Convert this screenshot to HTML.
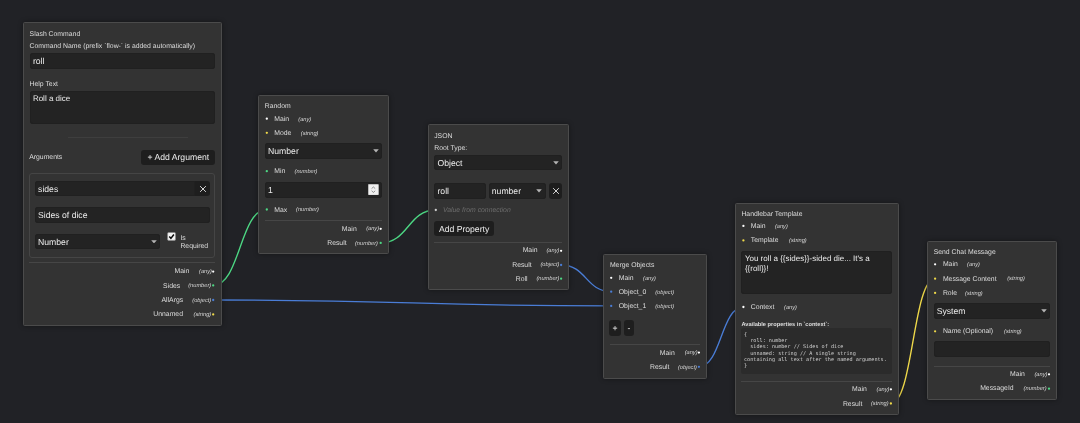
<!DOCTYPE html>
<html lang="en"><head><meta charset="utf-8"><title>Flow Editor</title>
<style>
html,body{margin:0;padding:0}
body{width:1080px;height:423px;overflow:hidden;background:#212226;position:relative;font-family:"Liberation Sans",Arial,sans-serif;color:#dcdcdc}
#c{position:absolute;left:0;top:0;width:1080px;height:423px;will-change:transform}
#c>*{position:absolute;box-sizing:border-box}
.abs{position:absolute}
.node{background:#333333;border:1px solid #4b4b4b;border-radius:1.5px;box-shadow:0 0 5px rgba(0,0,0,.4)}
.tx{white-space:nowrap;color:#dedede;text-rendering:geometricPrecision}
.iv{color:#ececec}
.ty{font-style:italic;color:#d6d6d6}
.lb{color:#dedede}
.mono{font-family:"DejaVu Sans Mono","Liberation Mono",monospace;color:#d0d0d0}
.inp{background:#232323;border-radius:3px;box-shadow:inset 0 0 0 1px #202020}
.btn{background:#1e1e1e;border-radius:3px}
.grp{border:1px solid #454545;border-radius:3px}
.code{background:#2b2b2b;border-radius:2.5px}
.sep{height:1px}
.spin svg{display:block}
</style></head>
<body>
<div id="c">
<svg class="abs" style="left:0;top:0" width="1080" height="423" viewBox="0 0 1080 423"><path d="M213.2 285.4 C240.0 285.4 240.0 209.5 266.8 209.5" stroke="#4dd884" stroke-width="1.35" fill="none"/><path d="M380.7 242.9 C408.2 242.9 408.2 210.0 435.8 210.0" stroke="#4dd884" stroke-width="1.35" fill="none"/><path d="M561.1 265.0 C586.2 265.0 586.2 291.7 611.2 291.7" stroke="#4a7dd6" stroke-width="1.35" fill="none"/><path d="M213.2 300.0 C412.2 300.0 412.2 305.9 611.2 305.9" stroke="#4a7dd6" stroke-width="1.35" fill="none"/><path d="M698.9 366.8 C721.1 366.8 721.1 307.0 743.4 307.0" stroke="#4a7dd6" stroke-width="1.35" fill="none"/><path d="M890.9 403.5 C913.0 403.5 913.0 278.7 935.1 278.7" stroke="#efd94a" stroke-width="1.35" fill="none"/></svg>
<div class="node" style="left:23.00px;top:22.00px;width:199.00px;height:304.00px;"></div>
<div class="tx " style="left:29.60px;top:31px;font-size:6.85px;line-height:8.9px;">Slash Command</div>
<div class="tx " style="left:29.60px;top:43px;font-size:6.85px;line-height:8.9px;">Command Name (prefix `flow-` is added automatically)</div>
<div class="inp" style="left:29.60px;top:53.40px;width:185.30px;height:15.40px;"></div>
<div class="tx iv" style="left:32.90px;top:56px;font-size:8.65px;line-height:11.25px;">roll</div>
<div class="tx " style="left:29.60px;top:81px;font-size:6.85px;line-height:8.9px;">Help Text</div>
<div class="inp" style="left:29.60px;top:90.70px;width:185.30px;height:33.10px;"></div>
<div class="tx iv" style="left:32.90px;top:94px;font-size:8.0px;line-height:10.4px;">Roll a dice</div>
<div class="sep" style="left:68.00px;top:136.70px;width:119.70px;background:#3e3e3e"></div>
<div class="tx " style="left:29.20px;top:154px;font-size:6.85px;line-height:8.9px;">Arguments</div>
<div class="btn" style="left:141.40px;top:149.50px;width:73.40px;height:15.20px;"></div>
<div class="tx iv" style="left:147.50px;top:152px;font-size:8.65px;line-height:11.25px;">+ Add Argument</div>
<div class="grp" style="left:29.20px;top:173.00px;width:185.60px;height:85.00px;"></div>
<div class="inp" style="left:34.80px;top:181.20px;width:160.50px;height:14.90px;border-radius:3px 0 0 3px;"></div>
<div class="tx iv" style="left:38.10px;top:184px;font-size:8.65px;line-height:11.25px;">sides</div>
<div class="btn" style="left:195.30px;top:181.20px;width:14.90px;height:14.90px;border-radius:0 3px 3px 0;"></div>
<svg class="abs" style="left:198.75px;top:184.65px" width="8" height="8" viewBox="-4 -4 8 8"><path d="M-2.6 -2.6L2.6 2.6M2.6 -2.6L-2.6 2.6" stroke="#e8e8e8" stroke-width="0.9" fill="none" stroke-linecap="round"/></svg>
<div class="inp" style="left:34.80px;top:207.00px;width:175.40px;height:15.90px;"></div>
<div class="tx iv" style="left:38.10px;top:210px;font-size:8.65px;line-height:11.25px;">Sides of dice</div>
<div class="inp" style="left:34.80px;top:233.50px;width:125.10px;height:15.90px;"></div>
<div class="tx iv" style="left:38.10px;top:237px;font-size:8.65px;line-height:11.25px;">Number</div>
<svg class="abs" style="left:150.60px;top:239.85px" width="6" height="3.6" viewBox="0 0 6 3.6"><path d="M0.2 0.2H5.8L3 3.4Z" fill="#b4b4b4"/></svg>
<svg class="abs" style="left:167px;top:232px" width="9" height="9" viewBox="0 0 9 9"><rect x="0.6" y="0.5" width="7.9" height="7.9" rx="1.2" fill="#f4f4f4" stroke="#8a8a8a" stroke-width="0.8"/><path d="M2.3 4.6L3.9 6.4L6.9 2.5" stroke="#0a0a0a" stroke-width="1.5" fill="none"/></svg>
<div class="tx " style="left:180.40px;top:235px;font-size:6.85px;line-height:8.9px;">Is</div>
<div class="tx " style="left:180.40px;top:243px;font-size:6.85px;line-height:8.9px;">Required</div>
<div class="sep" style="left:29.20px;top:262.30px;width:185.60px;background:#464646"></div>
<div class="tx lb" style="right:890.70px;top:268px;font-size:6.85px;line-height:8.9px;">Main</div>
<div class="tx ty" style="right:868.00px;top:269px;font-size:5.68px;line-height:7.38px;">(any)</div>
<div class="tx lb" style="right:899.80px;top:283px;font-size:6.85px;line-height:8.9px;">Sides</div>
<div class="tx ty" style="right:868.80px;top:283px;font-size:5.68px;line-height:7.38px;">(number)</div>
<div class="tx lb" style="right:896.80px;top:297px;font-size:6.85px;line-height:8.9px;">AllArgs</div>
<div class="tx ty" style="right:868.80px;top:298px;font-size:5.68px;line-height:7.38px;">(object)</div>
<div class="tx lb" style="right:897.00px;top:311px;font-size:6.85px;line-height:8.9px;">Unnamed</div>
<div class="tx ty" style="right:868.80px;top:312px;font-size:5.68px;line-height:7.38px;">(string)</div>
<div class="node" style="left:258.00px;top:95.00px;width:131.00px;height:159.00px;"></div>
<div class="tx " style="left:264.80px;top:103px;font-size:6.85px;line-height:8.9px;">Random</div>
<div class="tx lb" style="left:274.30px;top:116px;font-size:6.85px;line-height:8.9px;">Main</div>
<div class="tx ty" style="left:298.30px;top:117px;font-size:5.68px;line-height:7.38px;">(any)</div>
<div class="tx lb" style="left:274.30px;top:130px;font-size:6.85px;line-height:8.9px;">Mode</div>
<div class="tx ty" style="left:300.80px;top:131px;font-size:5.68px;line-height:7.38px;">(string)</div>
<div class="inp" style="left:264.80px;top:142.90px;width:117.20px;height:15.80px;"></div>
<div class="tx iv" style="left:268.10px;top:146px;font-size:8.65px;line-height:11.25px;">Number</div>
<svg class="abs" style="left:372.70px;top:149.20px" width="6" height="3.6" viewBox="0 0 6 3.6"><path d="M0.2 0.2H5.8L3 3.4Z" fill="#b4b4b4"/></svg>
<div class="tx lb" style="left:274.30px;top:168px;font-size:6.85px;line-height:8.9px;">Min</div>
<div class="tx ty" style="left:294.50px;top:169px;font-size:5.68px;line-height:7.38px;">(number)</div>
<div class="inp" style="left:264.80px;top:181.80px;width:117.20px;height:15.80px;"></div>
<div class="tx iv" style="left:268.10px;top:185px;font-size:8.65px;line-height:11.25px;">1</div>
<div class="spin" style="left:368.1px;top:183.9px;width:10.8px;height:11.3px"><svg width="10.8" height="11.3" viewBox="0 0 10.8 11.3"><rect x="0.3" y="0.3" width="10.2" height="10.7" fill="#f0f0f0" stroke="#c4c4c4" stroke-width="0.6" rx="0.8"/><path d="M3.6 4.6L5.4 3L7.2 4.6M3.6 6.8L5.4 8.4L7.2 6.8" stroke="#666" stroke-width="0.7" fill="none"/></svg></div>
<div class="tx lb" style="left:274.30px;top:207px;font-size:6.85px;line-height:8.9px;">Max</div>
<div class="tx ty" style="left:296.00px;top:207px;font-size:5.68px;line-height:7.38px;">(number)</div>
<div class="sep" style="left:264.80px;top:220.00px;width:117.20px;background:#464646"></div>
<div class="tx lb" style="right:723.30px;top:226px;font-size:6.85px;line-height:8.9px;">Main</div>
<div class="tx ty" style="right:700.90px;top:226px;font-size:5.68px;line-height:7.38px;">(any)</div>
<div class="tx lb" style="right:733.40px;top:240px;font-size:6.85px;line-height:8.9px;">Result</div>
<div class="tx ty" style="right:702.00px;top:241px;font-size:5.68px;line-height:7.38px;">(number)</div>
<div class="node" style="left:428.00px;top:124.00px;width:141.00px;height:166.00px;"></div>
<div class="tx " style="left:434.20px;top:133px;font-size:6.85px;line-height:8.9px;">JSON</div>
<div class="tx " style="left:434.20px;top:145px;font-size:6.85px;line-height:8.9px;">Root Type:</div>
<div class="inp" style="left:434.20px;top:154.70px;width:128.30px;height:15.80px;"></div>
<div class="tx iv" style="left:437.50px;top:158px;font-size:8.65px;line-height:11.25px;">Object</div>
<svg class="abs" style="left:553.20px;top:161.00px" width="6" height="3.6" viewBox="0 0 6 3.6"><path d="M0.2 0.2H5.8L3 3.4Z" fill="#b4b4b4"/></svg>
<div class="inp" style="left:434.20px;top:183.10px;width:51.50px;height:15.80px;"></div>
<div class="tx iv" style="left:437.50px;top:186px;font-size:8.65px;line-height:11.25px;">roll</div>
<div class="inp" style="left:488.50px;top:183.10px;width:57.20px;height:15.80px;"></div>
<div class="tx iv" style="left:491.80px;top:186px;font-size:8.65px;line-height:11.25px;">number</div>
<svg class="abs" style="left:536.40px;top:189.40px" width="6" height="3.6" viewBox="0 0 6 3.6"><path d="M0.2 0.2H5.8L3 3.4Z" fill="#b4b4b4"/></svg>
<div class="btn" style="left:548.80px;top:183.10px;width:13.70px;height:15.80px;"></div>
<svg class="abs" style="left:551.65px;top:187.00px" width="8" height="8" viewBox="-4 -4 8 8"><path d="M-2.6 -2.6L2.6 2.6M2.6 -2.6L-2.6 2.6" stroke="#e8e8e8" stroke-width="0.9" fill="none" stroke-linecap="round"/></svg>
<div class="tx lb" style="left:442.90px;top:207px;font-size:6.85px;line-height:8.9px;color:#6d6d6d;font-style:italic;">Value from connection</div>
<div class="btn" style="left:434.20px;top:220.50px;width:60.00px;height:15.90px;"></div>
<div class="tx iv" style="left:438.90px;top:224px;font-size:8.65px;line-height:11.25px;">Add Property</div>
<div class="sep" style="left:434.20px;top:241.80px;width:128.30px;background:#464646"></div>
<div class="tx lb" style="right:542.50px;top:247px;font-size:6.85px;line-height:8.9px;">Main</div>
<div class="tx ty" style="right:520.60px;top:248px;font-size:5.68px;line-height:7.38px;">(any)</div>
<div class="tx lb" style="right:548.40px;top:262px;font-size:6.85px;line-height:8.9px;">Result</div>
<div class="tx ty" style="right:520.60px;top:262px;font-size:5.68px;line-height:7.38px;">(object)</div>
<div class="tx lb" style="right:552.50px;top:276px;font-size:6.85px;line-height:8.9px;">Roll</div>
<div class="tx ty" style="right:520.60px;top:276px;font-size:5.68px;line-height:7.38px;">(number)</div>
<div class="node" style="left:603.00px;top:254.00px;width:104.00px;height:125.00px;"></div>
<div class="tx " style="left:609.90px;top:262px;font-size:6.85px;line-height:8.9px;">Merge Objects</div>
<div class="tx lb" style="left:618.80px;top:275px;font-size:6.85px;line-height:8.9px;">Main</div>
<div class="tx ty" style="left:643.00px;top:276px;font-size:5.68px;line-height:7.38px;">(any)</div>
<div class="tx lb" style="left:618.80px;top:289px;font-size:6.85px;line-height:8.9px;">Object_0</div>
<div class="tx ty" style="left:655.20px;top:290px;font-size:5.68px;line-height:7.38px;">(object)</div>
<div class="tx lb" style="left:618.80px;top:303px;font-size:6.85px;line-height:8.9px;">Object_1</div>
<div class="tx ty" style="left:655.20px;top:304px;font-size:5.68px;line-height:7.38px;">(object)</div>
<div class="btn" style="left:609.00px;top:320.00px;width:12.00px;height:16.00px;"></div>
<div class="tx iv" style="left:612.60px;top:323px;font-size:8.65px;line-height:11.25px;">+</div>
<div class="btn" style="left:624.00px;top:320.00px;width:10.00px;height:16.00px;"></div>
<div class="tx iv" style="left:627.50px;top:323px;font-size:8.65px;line-height:11.25px;">-</div>
<div class="sep" style="left:609.90px;top:343.80px;width:90.30px;background:#464646"></div>
<div class="tx lb" style="right:405.30px;top:350px;font-size:6.85px;line-height:8.9px;">Main</div>
<div class="tx ty" style="right:382.40px;top:350px;font-size:5.68px;line-height:7.38px;">(any)</div>
<div class="tx lb" style="right:410.60px;top:364px;font-size:6.85px;line-height:8.9px;">Result</div>
<div class="tx ty" style="right:383.10px;top:365px;font-size:5.68px;line-height:7.38px;">(object)</div>
<div class="node" style="left:734.50px;top:202.50px;width:164.50px;height:212.50px;"></div>
<div class="tx " style="left:741.40px;top:211px;font-size:6.85px;line-height:8.9px;">Handlebar Template</div>
<div class="tx lb" style="left:750.80px;top:223px;font-size:6.85px;line-height:8.9px;">Main</div>
<div class="tx ty" style="left:774.90px;top:224px;font-size:5.68px;line-height:7.38px;">(any)</div>
<div class="tx lb" style="left:750.80px;top:237px;font-size:6.85px;line-height:8.9px;">Template</div>
<div class="tx ty" style="left:789.10px;top:238px;font-size:5.68px;line-height:7.38px;">(string)</div>
<div class="inp" style="left:741.40px;top:250.90px;width:150.90px;height:42.80px;"></div>
<div class="tx iv" style="left:744.90px;top:254px;font-size:8.0px;line-height:10.4px;">You roll a {{sides}}-sided die... It's a</div>
<div class="tx iv" style="left:744.90px;top:264px;font-size:8.0px;line-height:10.4px;">{{roll}}!</div>
<div class="tx lb" style="left:750.80px;top:304px;font-size:6.85px;line-height:8.9px;">Context</div>
<div class="tx ty" style="left:784.00px;top:305px;font-size:5.68px;line-height:7.38px;">(any)</div>
<div class="tx lb" style="left:741.40px;top:322px;font-size:5.67px;line-height:7.37px;font-weight:bold;">Available properties in `context`:</div>
<div class="code" style="left:741.40px;top:328.40px;width:150.90px;height:45.30px;"></div>
<div class="tx mono" style="left:744.00px;top:332px;font-size:5.17px;line-height:6.72px;">{</div>
<div class="tx mono" style="left:744.00px;top:338px;font-size:5.17px;line-height:6.72px;">&nbsp;&nbsp;roll:&nbsp;number</div>
<div class="tx mono" style="left:744.00px;top:344px;font-size:5.17px;line-height:6.72px;">&nbsp;&nbsp;sides:&nbsp;number&nbsp;//&nbsp;Sides&nbsp;of&nbsp;dice</div>
<div class="tx mono" style="left:744.00px;top:351px;font-size:5.17px;line-height:6.72px;">&nbsp;&nbsp;unnamed:&nbsp;string&nbsp;//&nbsp;A&nbsp;single&nbsp;string</div>
<div class="tx mono" style="left:744.00px;top:357px;font-size:5.17px;line-height:6.72px;">containing&nbsp;all&nbsp;text&nbsp;after&nbsp;the&nbsp;named&nbsp;arguments.</div>
<div class="tx mono" style="left:744.00px;top:363px;font-size:5.17px;line-height:6.72px;">}</div>
<div class="sep" style="left:741.40px;top:380.90px;width:150.90px;background:#464646"></div>
<div class="tx lb" style="right:213.20px;top:386px;font-size:6.85px;line-height:8.9px;">Main</div>
<div class="tx ty" style="right:190.50px;top:387px;font-size:5.68px;line-height:7.38px;">(any)</div>
<div class="tx lb" style="right:217.70px;top:401px;font-size:6.85px;line-height:8.9px;">Result</div>
<div class="tx ty" style="right:191.40px;top:401px;font-size:5.68px;line-height:7.38px;">(string)</div>
<div class="node" style="left:927.00px;top:240.50px;width:130.00px;height:159.50px;"></div>
<div class="tx " style="left:933.70px;top:249px;font-size:6.85px;line-height:8.9px;">Send Chat Message</div>
<div class="tx lb" style="left:942.90px;top:261px;font-size:6.85px;line-height:8.9px;">Main</div>
<div class="tx ty" style="left:967.00px;top:262px;font-size:5.68px;line-height:7.38px;">(any)</div>
<div class="tx lb" style="left:942.90px;top:276px;font-size:6.85px;line-height:8.9px;">Message Content</div>
<div class="tx ty" style="left:1007.20px;top:276px;font-size:5.68px;line-height:7.38px;">(string)</div>
<div class="tx lb" style="left:942.90px;top:290px;font-size:6.85px;line-height:8.9px;">Role</div>
<div class="tx ty" style="left:965.10px;top:291px;font-size:5.68px;line-height:7.38px;">(string)</div>
<div class="inp" style="left:933.70px;top:303.30px;width:116.70px;height:15.30px;"></div>
<div class="tx iv" style="left:936.70px;top:306px;font-size:8.65px;line-height:11.25px;">System</div>
<svg class="abs" style="left:1041.10px;top:309.35px" width="6" height="3.6" viewBox="0 0 6 3.6"><path d="M0.2 0.2H5.8L3 3.4Z" fill="#b4b4b4"/></svg>
<div class="tx lb" style="left:942.90px;top:328px;font-size:6.85px;line-height:8.9px;">Name (Optional)</div>
<div class="tx ty" style="left:1004.10px;top:329px;font-size:5.68px;line-height:7.38px;">(string)</div>
<div class="inp" style="left:933.70px;top:341.40px;width:116.70px;height:15.90px;"></div>
<div class="sep" style="left:933.70px;top:365.80px;width:116.70px;background:#464646"></div>
<div class="tx lb" style="right:55.10px;top:371px;font-size:6.85px;line-height:8.9px;">Main</div>
<div class="tx ty" style="right:32.60px;top:372px;font-size:5.68px;line-height:7.38px;">(any)</div>
<div class="tx lb" style="right:66.40px;top:385px;font-size:6.85px;line-height:8.9px;">MessageId</div>
<div class="tx ty" style="right:33.40px;top:386px;font-size:5.68px;line-height:7.38px;">(number)</div>
<svg class="abs" style="left:0;top:0" width="1080" height="423" viewBox="0 0 1080 423"><circle cx="213.2" cy="271.6" r="1.15" fill="#ffffff"/><circle cx="213.2" cy="285.4" r="1.15" fill="#4dd884"/><circle cx="213.2" cy="300.0" r="1.15" fill="#4a7dd6"/><circle cx="213.2" cy="314.4" r="1.15" fill="#efd94a"/><circle cx="266.8" cy="118.7" r="1.15" fill="#ffffff"/><circle cx="266.8" cy="132.8" r="1.15" fill="#efd94a"/><circle cx="266.8" cy="171.2" r="1.15" fill="#4dd884"/><circle cx="266.8" cy="209.5" r="1.15" fill="#4dd884"/><circle cx="380.7" cy="228.8" r="1.15" fill="#ffffff"/><circle cx="380.7" cy="242.9" r="1.15" fill="#4dd884"/><circle cx="435.8" cy="210.0" r="1.15" fill="#cfcfcf"/><circle cx="561.1" cy="250.8" r="1.15" fill="#ffffff"/><circle cx="561.1" cy="265.0" r="1.15" fill="#4a7dd6"/><circle cx="561.1" cy="278.7" r="1.15" fill="#4dd884"/><circle cx="611.2" cy="277.8" r="1.15" fill="#ffffff"/><circle cx="611.2" cy="291.7" r="1.15" fill="#4a7dd6"/><circle cx="611.2" cy="305.9" r="1.15" fill="#4a7dd6"/><circle cx="698.9" cy="352.6" r="1.15" fill="#ffffff"/><circle cx="698.9" cy="366.8" r="1.15" fill="#4a7dd6"/><circle cx="743.4" cy="225.9" r="1.15" fill="#ffffff"/><circle cx="743.4" cy="240.4" r="1.15" fill="#efd94a"/><circle cx="743.4" cy="307.0" r="1.15" fill="#ffffff"/><circle cx="890.9" cy="389.3" r="1.15" fill="#ffffff"/><circle cx="890.9" cy="403.5" r="1.15" fill="#efd94a"/><circle cx="935.1" cy="264.3" r="1.15" fill="#ffffff"/><circle cx="935.1" cy="278.7" r="1.15" fill="#efd94a"/><circle cx="935.1" cy="292.9" r="1.15" fill="#efd94a"/><circle cx="935.1" cy="331.3" r="1.15" fill="#efd94a"/><circle cx="1049.0" cy="374.3" r="1.15" fill="#ffffff"/><circle cx="1049.0" cy="388.7" r="1.15" fill="#4dd884"/></svg>
</div>
</body></html>
